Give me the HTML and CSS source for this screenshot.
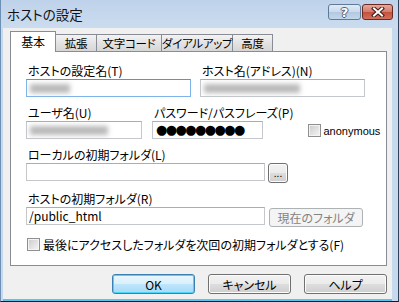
FILE: index.html
```html
<!DOCTYPE html>
<html lang="ja">
<head>
<meta charset="UTF-8" />
<title>ホストの設定</title>
<link rel="stylesheet" href="styles.css">
</head>
<body>
<div class="window">
    <div class="titlebar">
        <span class="title">ホストの設定</span>
        <div class="capbtns">
            <span class="capbtn help">?</span>
            <span class="capbtn close">
                <svg width="14" height="10" viewBox="0 0 14 10">
                    <path d="M3 1.5 L11 8.5 M11 1.5 L3 8.5" stroke="#3a1a14" stroke-width="4" stroke-linecap="square"/>
                    <path d="M3 1.5 L11 8.5 M11 1.5 L3 8.5" stroke="#fff" stroke-width="2" stroke-linecap="square"/>
                </svg>
            </span>
        </div>
    </div>
    <div class="client">
        <div class="tabs">
            <div class="tab active" style="width:46px">基本</div>
            <div class="tab" style="width:41px">拡張</div>
            <div class="tab" style="width:65px">文字コード</div>
            <div class="tab" style="width:71px">ダイアルアップ</div>
            <div class="tab" style="width:40px">高度</div>
        </div>
        <div class="panel">
            <div class="row">
                <div class="field">
                    <label>ホストの設定名(T)</label>
                    <div class="input focus w165"><span class="blur" style="width:40px"></span></div>
                </div>
                <div class="field gap9">
                    <label>ホスト名(アドレス)(N)</label>
                    <div class="input w165"><span class="blur" style="width:96px"></span></div>
                </div>
            </div>
            <div class="row">
                <div class="field">
                    <label>ユーザ名(U)</label>
                    <div class="input w116"><span class="blur" style="width:78px"></span></div>
                </div>
                <div class="field gap10">
                    <label>パスワード/パスフレーズ(P)</label>
                    <div class="input w111 dots">●●●●●●●●●</div>
                </div>
                <div class="checkline anon">
                    <span class="check"></span>
                    <span class="anon-text">anonymous</span>
                </div>
            </div>
            <div class="row">
                <div class="field">
                    <label>ローカルの初期フォルダ(L)</label>
                    <div class="inline">
                        <div class="input w239"></div>
                        <div class="btn small">...</div>
                    </div>
                </div>
            </div>
            <div class="row">
                <div class="field">
                    <label>ホストの初期フォルダ(R)</label>
                    <div class="inline">
                        <div class="input w239">/public_html</div>
                        <div class="btn disabled">現在のフォルダ</div>
                    </div>
                </div>
            </div>
            <div class="checkline last">
                <span class="check"></span>
                <span>最後にアクセスしたフォルダを次回の初期フォルダとする(F)</span>
            </div>
        </div>
        <div class="actions">
            <div class="btn dlg default">OK</div>
            <div class="btn dlg">キャンセル</div>
            <div class="btn dlg">ヘルプ</div>
        </div>
    </div>
</div>
</body>
</html>
```

FILE: styles.css
```css
body{
    margin: 0;
    padding: 0;
    background: #000;
    font-family: "Noto Sans CJK JP", "Noto Sans", sans-serif;
    font-feature-settings: "palt";
    color: #000;
}
.window{
    width: 399px;
    height: 302px;
    box-sizing: border-box;
    background: #c7d9ed;
    border-right: 1px solid #2f4159;
    border-left: 1px solid #6e8fb4;
    border-bottom: 1px solid #0e1a26;
    display: flex;
    flex-direction: column;
}
.titlebar{
    height: 28px;
    flex: none;
    display: flex;
    align-items: flex-start;
    justify-content: space-between;
    background: linear-gradient(#bed2ea, #cbdcef);
}
.title{
    font-size: 13.5px;
    line-height: 18px;
    margin: 5px 0 0 6px;
    color: #111;
}
.capbtns{
    display: flex;
    margin: 4px 5px 0 0;
}
.capbtn{
    height: 16px;
    box-sizing: border-box;
    border: 1px solid #5f7a99;
    border-radius: 3px;
    display: flex;
    align-items: center;
    justify-content: center;
}
.help{
    width: 33px;
    background: linear-gradient(#e1ebf6 0%, #c9d9ec 50%, #b3c8e0 51%, #c3d6ea 100%);
    font: bold 13px "DejaVu Sans", sans-serif;
    color: #fff;
    text-shadow: 1px 0 #4d627a, -1px 0 #4d627a, 0 1px #4d627a, 0 -1px #4d627a;
    margin-right: 1px;
}
.close{
    width: 31px;
    border-color: #6a2a22;
    background: linear-gradient(#e7a89c 0%, #d47a6a 50%, #c2503e 51%, #d3705c 100%);
}
.client{
    flex: 1;
    margin: 0 6px 2px 2px;
    background: #f0f0f0;
    box-shadow: 0 2px 0 #54c6ee;
    font-size: 12px;
    display: flex;
    flex-direction: column;
}
.tabs{
    display: flex;
    align-items: flex-end;
    margin: 3px 0 0 7px;
    height: 20px;
    position: relative;
    z-index: 1;
}
.tab{
    height: 17px;
    box-sizing: border-box;
    border: 1px solid #898c95;
    border-bottom: none;
    border-left: none;
    background: linear-gradient(#f3f3f3, #e3e3e3 50%, #d6d6d6);
    font-size: 11.5px;
    letter-spacing: -0.3px;
    line-height: 16px;
    text-align: center;
    white-space: nowrap;
}
.tab.active{
    height: 21px;
    margin-bottom: -1px;
    border-left: 1px solid #898c95;
    background: #fff;
    font-size: 12px;
    line-height: 20px;
}
.panel{
    margin-left: 7px;
    width: 377px;
    height: 215px;
    box-sizing: border-box;
    border: 1px solid #898c95;
    background: #fff;
    padding: 12px 0 0 15px;
}
.row{
    display: flex;
    align-items: flex-end;
    margin-bottom: 9px;
}
.field{
    display: flex;
    flex-direction: column;
}
.field label{
    height: 13px;
    line-height: 13px;
    margin: 0 0 2px 2px;
    white-space: nowrap;
}
.gap9{ margin-left: 9px; }
.gap10{ margin-left: 10px; }
.inline{
    display: flex;
    align-items: flex-start;
}
.input{
    height: 18px;
    box-sizing: border-box;
    border: 1px solid #c4c7cc;
    border-top-color: #abadb3;
    background: #fff;
    line-height: 16px;
    padding-left: 2px;
    display: flex;
    align-items: center;
    font-size: 12px;
}
.input.focus{
    border-color: #7eb4ea;
    border-top-color: #5c93c9;
}
.w165{ width: 165px; }
.w116{ width: 116px; }
.w111{ width: 111px; }
.w239{ width: 239px; }
.blur{
    display: inline-block;
    height: 9px;
    margin-left: 1px;
    background: #b9b9b9;
    filter: blur(2.5px);
}
.dots{
    font-family: "DejaVu Sans", sans-serif;
    font-size: 13px;
    letter-spacing: -1.6px;
    padding-left: 3px;
}
.checkline{
    display: flex;
    align-items: center;
    gap: 3px;
    white-space: nowrap;
}
.anon{
    margin: 0 0 2px 14px;
}
.anon-text{
    font-family: "Liberation Sans", sans-serif;
    font-size: 11px;
}
.check{
    width: 13px;
    height: 13px;
    box-sizing: border-box;
    border: 1px solid #8f8f8f;
    background: linear-gradient(135deg, #cbcbcb, #f6f6f6);
    box-shadow: inset 0 0 0 1px #f4f4f4;
    flex: none;
}
.last{
    margin: 4px 0 0 1px;
}
.btn{
    box-sizing: border-box;
    border: 1px solid #707070;
    border-radius: 3px;
    background: linear-gradient(#f2f2f2 0%, #ebebeb 50%, #dddddd 51%, #cfcfcf 100%);
    box-shadow: inset 0 0 0 1px #fcfcfc;
    display: flex;
    align-items: center;
    justify-content: center;
    font-size: 12px;
}
.btn.small{
    width: 20px;
    height: 20px;
    margin-left: 3px;
    font-size: 10px;
    line-height: 10px;
}
.btn.disabled{
    width: 94px;
    height: 19px;
    margin: 1px 0 0 4px;
    border-color: #adb2b5;
    background: #f4f4f4;
    box-shadow: none;
    color: #838383;
}
.actions{
    display: flex;
    justify-content: flex-end;
    gap: 13px;
    margin: 8px 5px 0 0;
}
.btn.dlg{
    width: 83px;
    height: 20px;
}
.btn.default{
    border-color: #3c7fb1;
    background: linear-gradient(#eaf6fd 0%, #d9f0fc 50%, #bee6fd 51%, #a7d9f5 100%);
    box-shadow: inset 0 0 0 1px #48d7fb;
}
```
